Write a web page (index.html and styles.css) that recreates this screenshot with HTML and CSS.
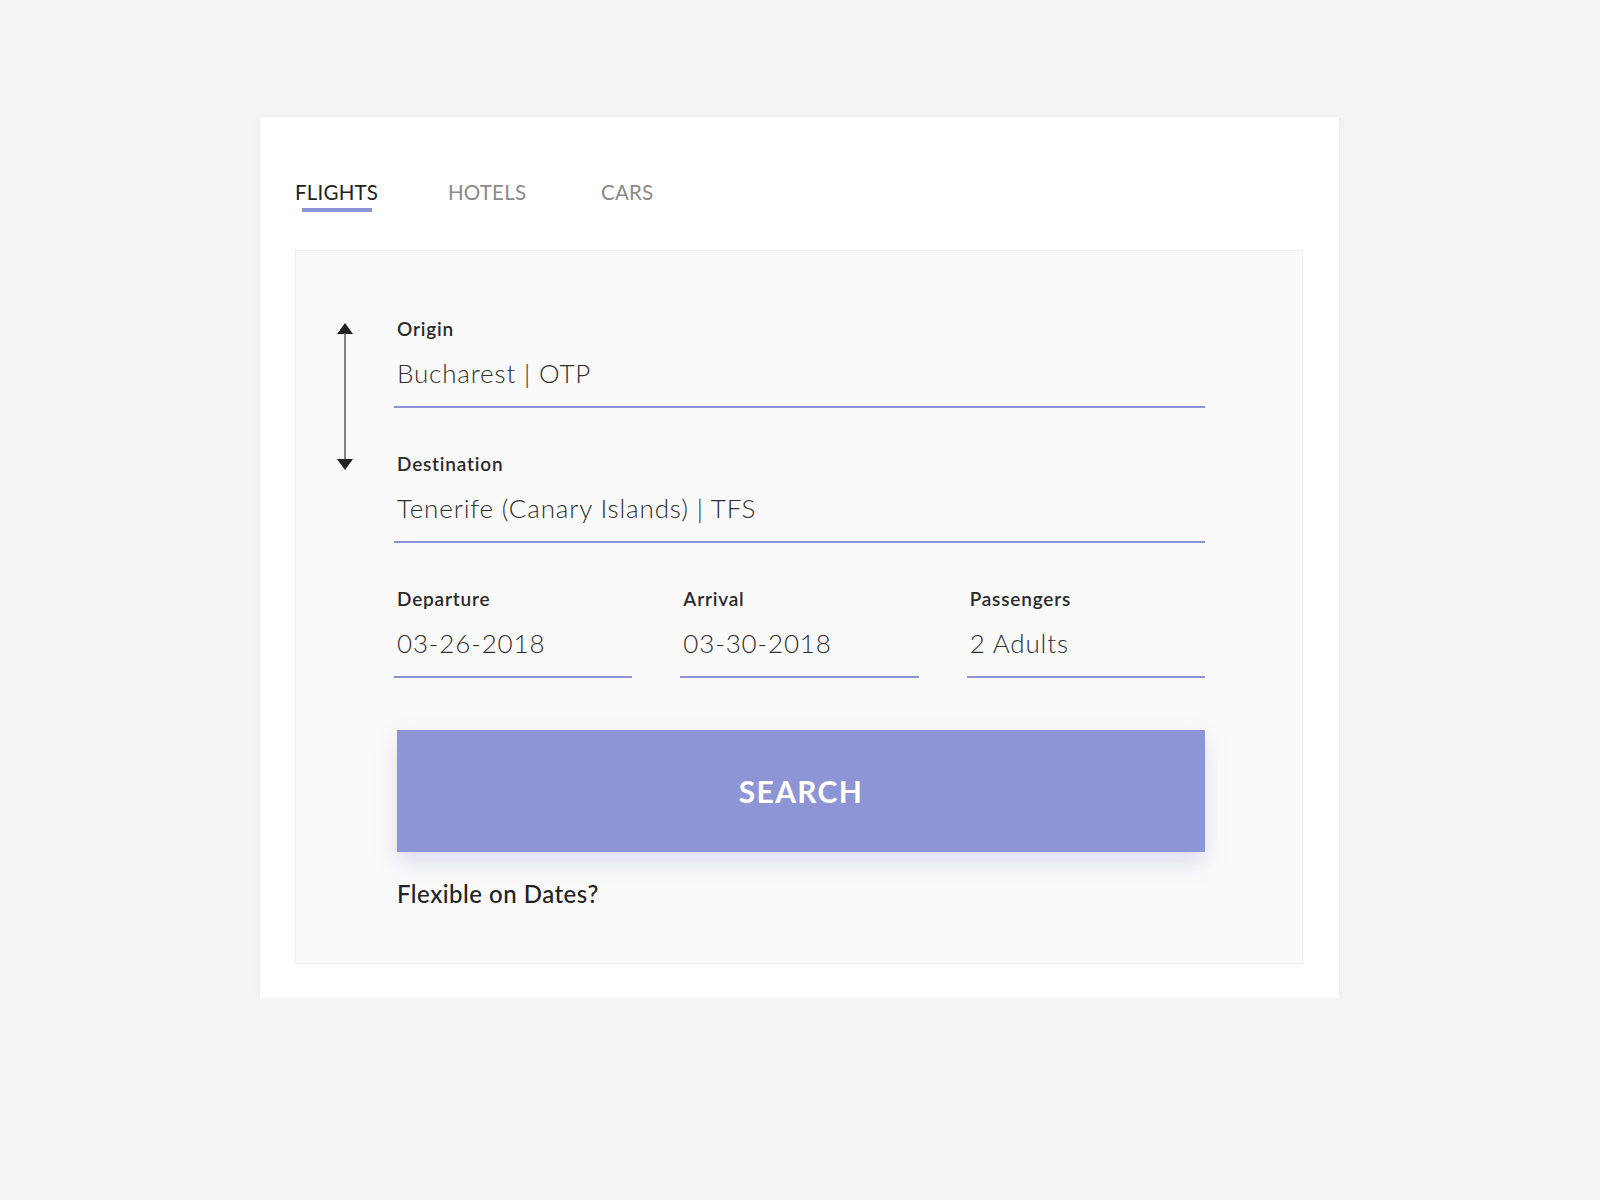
FILE: index.html
```html
<!DOCTYPE html>
<html>
<head>
<meta charset="utf-8">
<link rel="stylesheet" href="styles.css">
</head>
<body>
<div class="card">
  <nav class="tabs">
    <span class="tab active">FLIGHTS</span>
    <span class="tab">HOTELS</span>
    <span class="tab">CARS</span>
  </nav>
  <div class="panel">
    <div class="swap">
      <svg width="16" height="147" viewBox="0 0 16 147">
        <polygon points="8,0 16,11 0,11" fill="#222"/>
        <line x1="8" y1="10" x2="8" y2="137" stroke="#666" stroke-width="1.6"/>
        <polygon points="0,136 16,136 8,147" fill="#222"/>
      </svg>
    </div>
    <div class="form">
      <div class="field">
        <div class="label">Origin</div>
        <div class="value">Bucharest | OTP</div>
      </div>
      <div class="field spaced">
        <div class="label">Destination</div>
        <div class="value">Tenerife (Canary Islands) | TFS</div>
      </div>
      <div class="row spaced">
        <div class="field">
          <div class="label">Departure</div>
          <div class="value">03-26-2018</div>
        </div>
        <div class="field">
          <div class="label">Arrival</div>
          <div class="value">03-30-2018</div>
        </div>
        <div class="field">
          <div class="label">Passengers</div>
          <div class="value">2 Adults</div>
        </div>
      </div>
      <button class="search">SEARCH</button>
      <div class="flex">Flexible on Dates?</div>
    </div>
  </div>
</div>
</body>
</html>
```

FILE: styles.css
```css
html, body {
  margin: 0;
  padding: 0;
  background: #f4f4f4;
  font-family: Lato, "Open Sans", sans-serif;
  color: #2a2a2a;
}
body {
  padding: 117px 0 0 260px;
}
.card {
  width: 1079px;
  box-sizing: border-box;
  background: #fff;
  box-shadow: 0 1px 8px rgba(0, 0, 0, 0.05);
  padding: 63px 36px 34px 35px;
}
.tabs {
  display: flex;
  height: 70px;
}
.tab {
  width: 153px;
  font-size: 20.5px;
  line-height: 24px;
  letter-spacing: 0.2px;
  color: #8a8a8a;
  display: flex;
  flex-direction: column;
  align-items: flex-start;
}
.tab.active {
  color: #222;
}
.tab.active::after {
  content: "";
  display: block;
  width: 70px;
  height: 4px;
  margin: 4px 0 0 7px;
  background: #8e93d6;
}
.panel {
  background: #fafafa;
  border: 1px solid #eeeeee;
  display: flex;
  padding: 66px 97px 55px 0;
}
.swap {
  width: 98px;
  flex: none;
  display: flex;
  justify-content: center;
  align-items: flex-start;
}
.swap svg {
  margin-top: 6px;
}
.form {
  flex: 1;
}
.field {
  border-bottom: 2px solid #8c92d6;
  padding: 0 0 14px 3px;
}
.label {
  font-size: 19px;
  line-height: 24px;
  font-weight: 600;
  letter-spacing: 0.8px;
  color: #2a2a2a;
}
.value {
  font-size: 26px;
  line-height: 36px;
  font-weight: 300;
  letter-spacing: 0.85px;
  color: #2e2e2e;
  margin-top: 14px;
  padding-bottom: 1px;
}
.spaced {
  margin-top: 44px;
}
.row {
  display: grid;
  grid-template-columns: repeat(3, 1fr);
  column-gap: 48px;
}
.search {
  display: block;
  width: 808px;
  height: 122px;
  margin: 52px 0 0 3px;
  border: 0;
  background: #8e95d6;
  color: #fff;
  font-family: Lato, "Open Sans", sans-serif;
  font-weight: 700;
  font-size: 30px;
  letter-spacing: 1.3px;
  box-shadow: 0 10px 20px rgba(142, 149, 214, 0.28);
  padding: 0;
}
.flex {
  margin: 28px 0 0 3px;
  font-size: 24px;
  line-height: 28px;
  font-weight: 500;
  letter-spacing: 0.5px;
  color: #222;
}
```
